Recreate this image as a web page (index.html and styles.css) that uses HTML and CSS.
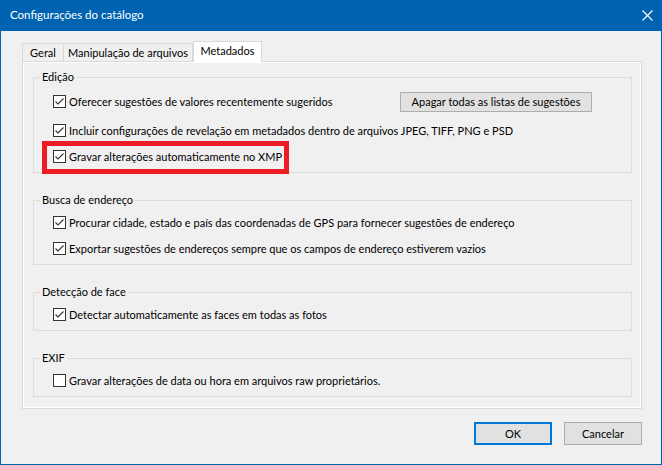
FILE: index.html
```html
<!DOCTYPE html>
<html lang="pt-BR">
<head>
<meta charset="utf-8">
<title>Configurações do catálogo</title>
<link rel="stylesheet" href="styles.css">
</head>
<body>
<div class="window">
  <div class="titlebar">
    <span class="title">Configurações do catálogo</span>
    <svg class="close" width="11" height="11" viewBox="0 0 11 11"><path d="M0.5 0.5 L10.5 10.5 M10.5 0.5 L0.5 10.5" stroke="#fff" stroke-width="1.1" fill="none"/></svg>
  </div>
  <div class="content">
    <div class="tabs">
      <div class="tab tab-first">Geral</div>
      <div class="tab tab-mid">Manipulação de arquivos</div>
      <div class="tab tab-active">Metadados</div>
    </div>
    <div class="panel">
      <fieldset class="group">
        <legend>Edição</legend>
        <div class="rows">
          <div class="row row-tall">
            <label class="check"><span class="box"><svg viewBox="0 0 11 11"><polyline points="1.5,5.5 4,8 9.5,2.5"/></svg></span>Oferecer sugestões de valores recentemente sugeridos</label>
            <button class="btn btn-clear">Apagar todas as listas de sugestões</button>
          </div>
          <div class="row">
            <label class="check"><span class="box"><svg viewBox="0 0 11 11"><polyline points="1.5,5.5 4,8 9.5,2.5"/></svg></span>Incluir configurações de revelação em metadados dentro de arquivos JPEG, TIFF, PNG e PSD</label>
          </div>
          <div class="row">
            <label class="check"><span class="box"><svg viewBox="0 0 11 11"><polyline points="1.5,5.5 4,8 9.5,2.5"/></svg></span>Gravar alterações automaticamente no XMP</label>
          </div>
        </div>
      </fieldset>
      <fieldset class="group">
        <legend>Busca de endereço</legend>
        <div class="rows">
          <div class="row">
            <label class="check"><span class="box"><svg viewBox="0 0 11 11"><polyline points="1.5,5.5 4,8 9.5,2.5"/></svg></span>Procurar cidade, estado e país das coordenadas de GPS para fornecer sugestões de endereço</label>
          </div>
          <div class="row">
            <label class="check"><span class="box"><svg viewBox="0 0 11 11"><polyline points="1.5,5.5 4,8 9.5,2.5"/></svg></span>Exportar sugestões de endereços sempre que os campos de endereço estiverem vazios</label>
          </div>
        </div>
      </fieldset>
      <fieldset class="group">
        <legend>Detecção de face</legend>
        <div class="rows">
          <div class="row">
            <label class="check"><span class="box"><svg viewBox="0 0 11 11"><polyline points="1.5,5.5 4,8 9.5,2.5"/></svg></span>Detectar automaticamente as faces em todas as fotos</label>
          </div>
        </div>
      </fieldset>
      <fieldset class="group">
        <legend>EXIF</legend>
        <div class="rows">
          <div class="row">
            <label class="check"><span class="box"></span>Gravar alterações de data ou hora em arquivos raw proprietários.</label>
          </div>
        </div>
      </fieldset>
      <div class="highlight"></div>
    </div>
    <div class="footer">
      <button class="btn btn-default">OK</button>
      <button class="btn">Cancelar</button>
    </div>
  </div>
</div>
</body>
</html>
```
FILE: styles.css
```css
* { box-sizing: border-box; }
html, body { margin: 0; padding: 0; }
body {
  width: 662px;
  height: 465px;
  overflow: hidden;
  background: #f0f0f0;
  font-family: Lato, "Liberation Sans", Arial, sans-serif;
  font-size: 11px;
  color: #000;
}
.window {
  width: 662px;
  height: 465px;
  border: 1px solid #0063b1;
  border-top: none;
  background: #f0f0f0;
  display: flex;
  flex-direction: column;
}
.titlebar {
  height: 31px;
  margin: 0 -1px;
  background: #0063b1;
  color: #fff;
  display: flex;
  align-items: center;
  justify-content: space-between;
  padding: 0 9px 2px 10px;
  font-size: 11.5px;
  white-space: nowrap;
}
.close { display: block; margin-top: 1px; }
.content {
  padding: 10px 0 0 21px;
}
.tabs {
  display: flex;
  align-items: flex-end;
  height: 20px;
}
.tab {
  height: 18px;
  display: flex;
  align-items: center;
  justify-content: center;
  white-space: nowrap;
  border-top: 1px solid #d9d9d9;
  border-right: 1px solid #d9d9d9;
  background: #f0f0f0;
  padding-bottom: 1px;
}
.tab-first { width: 42px; border-left: 1px solid #d9d9d9; }
.tab-mid { width: 129px; }
.tab-active {
  width: 69px;
  height: 21px;
  margin-bottom: -1px;
  background: #fff;
  border-left: 1px solid #d9d9d9;
  position: relative;
  z-index: 1;
  padding-bottom: 4px;
}
.panel {
  position: relative;
  width: 620px;
  height: 348px;
  border: 1px solid #d9d9d9;
  box-shadow: inset 0 0 0 1px #fff;
  padding: 8px 9px 0 10px;
  display: flex;
  flex-direction: column;
  gap: 20px;
}
.group {
  margin: 0;
  padding: 0;
  min-width: 0;
  border: 1px solid #dcdcdc;
}
.group legend {
  margin-left: 6px;
  padding: 0 2px;
  line-height: 14px;
  height: 14px;
  white-space: nowrap;
}
.rows {
  padding: 2px 0 3px 19px;
}
.row {
  height: 26px;
  display: flex;
  align-items: center;
}
.row-tall {
  height: 31px;
  padding-right: 39px;
  justify-content: space-between;
}
.check {
  display: flex;
  align-items: center;
  gap: 3px;
  white-space: nowrap;
}
.box {
  width: 13px;
  height: 13px;
  border: 1px solid #333;
  background: #fff;
  display: block;
  flex: none;
}
.box svg {
  display: block;
  width: 11px;
  height: 11px;
  fill: none;
  stroke: #333;
  stroke-width: 1.1;
}
.btn {
  font-family: inherit;
  font-size: 11px;
  color: #000;
  background: #e1e1e1;
  border: 1px solid #adadad;
  border-radius: 0;
  padding: 0;
  margin: 0;
  white-space: nowrap;
}
.btn-clear {
  width: 192px;
  height: 20px;
}
.highlight {
  position: absolute;
  left: 19px;
  top: 79px;
  width: 247px;
  height: 33px;
  border: 5px solid #ed1c24;
}
.footer {
  display: flex;
  justify-content: flex-end;
  gap: 12px;
  padding-right: 19px;
  margin-top: 13px;
}
.footer .btn {
  width: 78px;
  height: 23px;
}
.btn-default {
  border: 2px solid #0078d7;
}
```
